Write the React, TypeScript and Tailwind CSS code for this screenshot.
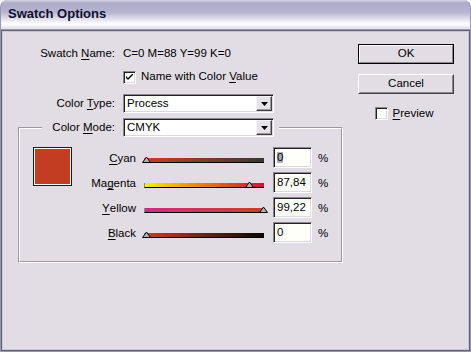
import React from "react";

const sunken =
  "border border-t-[#8a8790] border-l-[#8a8790] border-b-white border-r-white shadow-[inset_1px_1px_0_#202020,inset_-1px_-1px_0_#dcd8e0]";

function U({ children }: { children: React.ReactNode }) {
  return <span className="underline underline-offset-[2px]">{children}</span>;
}

function Dropdown({ value }: { value: string }) {
  return (
    <div className={`w-[151px] h-[19px] bg-white flex items-center ${sunken}`}>
      <span className="flex-1 pl-[3px] leading-none">{value}</span>
      <div className="w-[16px] h-[15px] mr-[1px] bg-[#e6e2ea] border border-t-[#f4f2f6] border-l-[#f4f2f6] border-b-[#404040] border-r-[#404040] shadow-[inset_-1px_-1px_0_#9c98a4] flex items-center justify-center">
        <svg width="7" height="4" viewBox="0 0 7 4">
          <polygon points="0,0 7,0 3.5,4" fill="#000" />
        </svg>
      </div>
    </div>
  );
}

function Checkbox({ checked }: { checked: boolean }) {
  return (
    <div className={`w-[13px] h-[13px] bg-white flex items-center justify-center ${sunken}`}>
      {checked && (
        <svg width="7" height="7" viewBox="0 0 7 7">
          <path d="M0 2 L0 4 L2 6 L7 1 L7 -1 L2 4 Z" fill="#000" />
        </svg>
      )}
    </div>
  );
}

type Row = {
  label: React.ReactNode;
  value: number;
  text: string;
  track: string;
  selected?: boolean;
};

const rows: Row[] = [
  {
    label: (
      <>
        <U>C</U>yan
      </>
    ),
    value: 0,
    text: "0",
    track: "bg-[linear-gradient(to_right,#c8401f,#383636)]",
    selected: true,
  },
  {
    label: (
      <>
        Ma<U>g</U>enta
      </>
    ),
    value: 87.84,
    text: "87,84",
    track: "bg-[linear-gradient(to_right,#f6f000,#e07a1c_50%,#cc1038)]",
  },
  {
    label: (
      <>
        <U>Y</U>ellow
      </>
    ),
    value: 99.22,
    text: "99,22",
    track: "bg-[linear-gradient(to_right,#cc2e82,#c8402a)]",
  },
  {
    label: (
      <>
        <U>B</U>lack
      </>
    ),
    value: 0,
    text: "0",
    track: "bg-[linear-gradient(to_right,#c8401f,#0a0606)]",
  },
];

function SliderRow({ r }: { r: Row }) {
  const center = (r.value / 100) * 118 + 2;
  return (
    <div className="flex h-[21px]">
      <div className="w-[64px] h-[21px] flex items-center justify-end pt-[3px] leading-none">
        {r.label}
      </div>
      <div className="relative w-[120px] h-[21px] ml-[8px]">
        <div
          className={`absolute left-0 top-[11px] w-[120px] h-[5px] border-l border-l-[#8c8a90] border-b border-b-black ${r.track}`}
        />
        <svg
          className="absolute top-[9px]"
          style={{ left: `${center - 4.5}px` }}
          width="9"
          height="7"
          viewBox="0 0 9 7"
        >
          <polygon points="0.5,6.5 4.5,1 8.5,6.5" fill="#b0aeb6" stroke="#000" strokeWidth="1" />
        </svg>
      </div>
      <div className={`ml-[9px] w-[39px] h-[21px] bg-[#fffffa] flex items-center pl-[3px] leading-none ${sunken}`}>
        {r.selected ? <span className="bg-[#aeacbc]">{r.text}</span> : <span>{r.text}</span>}
      </div>
      <div className="ml-[6px] h-[21px] flex items-center pt-[3px] leading-none">%</div>
    </div>
  );
}

export default function App() {
  return (
    <div
      className="w-[471px] h-[352px] bg-white flex flex-col text-[11.5px] text-black"
      style={{ fontFamily: '"Liberation Sans", Arial, sans-serif' }}
    >
      <div className="h-[29px] rounded-t-[7px] bg-[linear-gradient(to_bottom,#d6d4e4_0px,#aeabc8_3px,#b6b3ce_12px,#ffffff_24px,#e6e2ec_28px)] border-l border-r border-[#9a98b0] flex items-center pl-[7px] pb-[1px]">
        <span className="text-[13px] font-bold text-[#101030]">Swatch Options</span>
      </div>
      <div className="flex-1 border border-[#9698aa]">
        <div className="h-full border border-[#5e6278]">
          <div className="h-full border border-[#cac6d2] bg-[#e2dde4] flex">
            {/* left column */}
            <div className="w-[355px] flex flex-col pt-[14px]">
              <div className="flex h-[16px] items-center">
                <div className="w-[112px] text-right leading-none">
                  Swatch <U>N</U>ame:
                </div>
                <div className="ml-[8px] leading-none">C=0 M=88 Y=99 K=0</div>
              </div>
              <div className="flex h-[16px] items-center mt-[7px] pl-[120px]">
                <Checkbox checked />
                <span className="ml-[5px] leading-none">
                  Name with Color <U>V</U>alue
                </span>
              </div>
              <div className="flex h-[19px] items-center mt-[9px]">
                <div className="w-[112px] text-right leading-none">
                  Color <U>T</U>ype:
                </div>
                <div className="ml-[8px]">
                  <Dropdown value="Process" />
                </div>
              </div>
              <div className="flex mt-[5px] relative z-10">
                <div className="flex h-[19px] items-center ml-[39px] pr-[5px] bg-[#e2dde4]">
                  <div className="w-[73px] text-right leading-none">
                    Color <U>M</U>ode:
                  </div>
                  <div className="ml-[8px]">
                    <Dropdown value="CMYK" />
                  </div>
                </div>
              </div>
              <div className="ml-[15px] mt-[-10px] w-[325px] h-[136px] border border-t-[#9a98a2] border-l-[#9a98a2] border-b-white border-r-white">
                <div className="h-full border border-t-white border-l-white border-b-[#9a98a2] border-r-[#9a98a2] flex pt-[18px] pl-[13px]">
                  <div className="w-[39px] h-[39px] border border-[#1c1c1c] bg-white p-[1px]">
                    <div className="w-full h-full bg-[#c33d23]" />
                  </div>
                  <div className="flex flex-col gap-[4px]">
                    {rows.map((r, i) => (
                      <SliderRow key={i} r={r} />
                    ))}
                  </div>
                </div>
              </div>
            </div>
            {/* right column */}
            <div className="w-[96px] flex flex-col pt-[12px]">
              <button className="w-[96px] h-[20px] border border-black bg-[#e2dde4] leading-none">
                <div className="w-full h-full flex items-center justify-center border border-t-white border-l-white border-b-[#8c8994] border-r-[#8c8994]">
                  OK
                </div>
              </button>
              <button className="mt-[10px] w-[96px] h-[20px] border border-t-white border-l-white border-b-[#404040] border-r-[#404040] bg-[#e2dde4] leading-none">
                <div className="w-full h-full flex items-center justify-center border border-transparent border-b-[#8c8994] border-r-[#8c8994]">
                  Cancel
                </div>
              </button>
              <div className="mt-[13px] flex items-center justify-center h-[13px] pr-[4px]">
                <Checkbox checked={false} />
                <span className="ml-[5px] leading-none">
                  <U>P</U>review
                </span>
              </div>
            </div>
          </div>
        </div>
      </div>
    </div>
  );
}
